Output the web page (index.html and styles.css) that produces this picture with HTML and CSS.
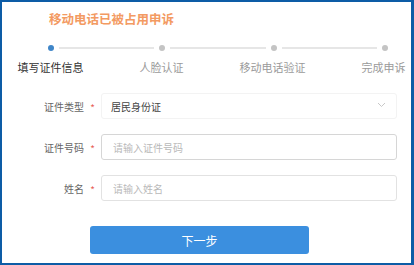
FILE: index.html
```html
<!DOCTYPE html>
<html lang="zh-CN">
<head>
  <meta charset="UTF-8">
  <title>移动电话已被占用申诉</title>
  <link rel="stylesheet" href="styles.css">
</head>
<body>
  <div class="frame">
    <h2 class="title">移动电话已被占用申诉</h2>

    <div class="track">
      <span class="dot active"></span>
      <span class="line"></span>
      <span class="dot"></span>
      <span class="line"></span>
      <span class="dot"></span>
      <span class="line"></span>
      <span class="dot"></span>
    </div>
    <div class="steps">
      <span class="step active">填写证件信息</span>
      <span class="step">人脸认证</span>
      <span class="step">移动电话验证</span>
      <span class="step">完成申诉</span>
    </div>

    <form class="form" id="appealForm">
      <div class="row">
        <label class="label">证件类型</label>
        <span class="req">*</span>
        <div class="select">
          <span>居民身份证</span>
          <svg class="chev" width="9" height="6" viewBox="0 0 9 6"><path d="M1 1l3.5 3.5L8 1" fill="none" stroke="#c8c8c8" stroke-width="1"/></svg>
        </div>
      </div>
      <div class="row">
        <label class="label" for="idno">证件号码</label>
        <span class="req">*</span>
        <input class="input" id="idno" type="text" placeholder="请输入证件号码">
      </div>
      <div class="row">
        <label class="label" for="name">姓名</label>
        <span class="req">*</span>
        <input class="input light" id="name" type="text" placeholder="请输入姓名">
      </div>
      <button class="next" type="submit">下一步</button>
    </form>
  </div>
</body>
</html>
```

FILE: styles.css
```css
* { box-sizing: border-box; }
html, body { margin: 0; padding: 0; }
body { font-family: "Noto Sans CJK SC", "Noto Sans", sans-serif; background: #fff; overflow: hidden; }

.frame { width: 414px; height: 265px; border: solid #0d5ca6; border-width: 2px 3px 2px 2px; overflow: hidden; }

.title { margin: 0; padding: 9px 0 0 47px; font-size: 12.5px; line-height: 16px; font-weight: bold; color: #f39a62; }

.track { display: flex; align-items: center; width: 340px; margin: 18px 0 0 46px; }
.dot { width: 6px; height: 6px; border-radius: 50%; background: #c4c4c4; flex: none; }
.dot.active { background: #3f86c8; }
.line { flex: 1; height: 2px; margin: 0 5px; background: #e6e6e6; }

.steps { display: flex; margin: 9px 0 0 -7px; width: 460px; }
.step { width: 111px; text-align: center; font-size: 11px; line-height: 14px; color: #9a9a9a; }
.step.active { color: #333; }

.form { margin-top: 19px; display: flex; flex-direction: column; gap: 15px; }
.row { display: flex; align-items: center; height: 26px; }
.label { width: 82px; text-align: right; font-size: 10px; color: #666; }
.req { width: 17px; text-align: center; font-size: 10px; color: #e8605a; padding-top: 2px; }
.select { width: 296px; height: 26px; display: flex; align-items: center; justify-content: space-between; padding: 0 10px 0 9px; border: 1px solid #f3f3f3; border-radius: 3px; font-size: 10px; color: #444; }
.chev { margin-top: -3px; }
.input { width: 296px; height: 26px; padding: 0 11px; border: 1px solid #d6d6d6; border-radius: 3px; font-family: inherit; font-size: 10px; color: #444; outline: none; }
.input.light { border-color: #e2e2e2; }
.input::placeholder { color: #b9b9b9; }

.next { margin: 10px 0 0 88px; width: 219px; height: 28px; border: 0; border-radius: 3px; background: #3b8fdf; color: #fff; font-family: inherit; font-size: 12px; }
```
